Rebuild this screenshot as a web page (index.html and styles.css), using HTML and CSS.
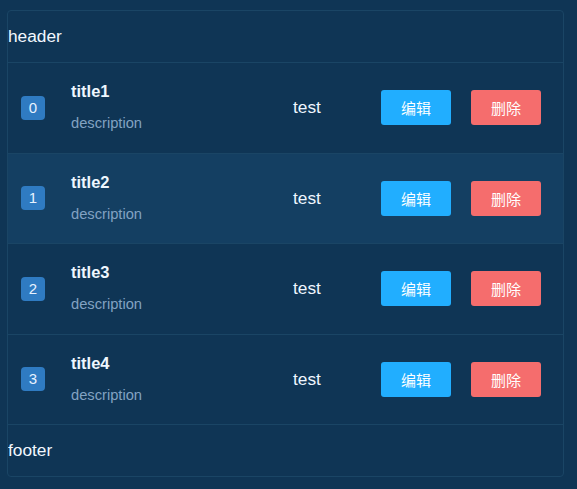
FILE: index.html
```html
<!DOCTYPE html>
<html lang="zh">
<head>
<meta charset="utf-8">
<title>list</title>
<link rel="stylesheet" href="styles.css">
</head>
<body>
<div class="panel">
  <div class="panel-header">header</div>
  <ul class="list">
    <li class="row">
      <span class="badge">0</span>
      <div class="info"><div class="title">title1</div><div class="desc">description</div></div>
      <span class="meta">test</span>
      <button class="btn btn-edit">编辑</button>
      <button class="btn btn-del">删除</button>
    </li>
    <li class="row active">
      <span class="badge">1</span>
      <div class="info"><div class="title">title2</div><div class="desc">description</div></div>
      <span class="meta">test</span>
      <button class="btn btn-edit">编辑</button>
      <button class="btn btn-del">删除</button>
    </li>
    <li class="row">
      <span class="badge">2</span>
      <div class="info"><div class="title">title3</div><div class="desc">description</div></div>
      <span class="meta">test</span>
      <button class="btn btn-edit">编辑</button>
      <button class="btn btn-del">删除</button>
    </li>
    <li class="row">
      <span class="badge">3</span>
      <div class="info"><div class="title">title4</div><div class="desc">description</div></div>
      <span class="meta">test</span>
      <button class="btn btn-edit">编辑</button>
      <button class="btn btn-del">删除</button>
    </li>
  </ul>
  <div class="panel-footer">footer</div>
</div>
</body>
</html>
```

FILE: styles.css
```css
html, body {
  margin: 0;
  padding: 0;
  background: #0f3555;
}
body {
  padding: 10px 13px 0 7px;
  font-family: "Liberation Sans", Arial, "Noto Sans CJK SC", sans-serif;
  color: #ffffff;
}
.panel {
  border: 1px solid #1a4565;
  border-radius: 4px;
  background: #0f3555;
  overflow: hidden;
}
.panel-header,
.panel-footer {
  height: 51px;
  line-height: 51px;
  font-size: 17.3px;
  padding-left: 0;
  color: #f2f8ff;
}
.panel-header {
  border-bottom: 1px solid #1a4565;
}
.list {
  list-style: none;
  margin: 0;
  padding: 0;
}
.row {
  display: flex;
  align-items: center;
  height: 89.5px;
  border-bottom: 1px solid #1a4565;
  padding-right: 22px;
}
.row.active {
  background: #143f62;
}
.badge {
  width: 24px;
  height: 24px;
  margin: 0 26px 0 13px;
  border-radius: 4px;
  background: #2f7bc2;
  color: #e8f2ff;
  font-size: 15px;
  line-height: 24px;
  text-align: center;
  flex: none;
}
.info {
  flex: 1;
  margin-top: -1px;
}
.title {
  font-size: 16.5px;
  font-weight: bold;
  line-height: 20px;
  color: #eef7ff;
}
.desc {
  margin-top: 12px;
  font-size: 14.7px;
  line-height: 20px;
  color: #82a2c2;
}
.meta {
  width: 88px;
  font-size: 17.3px;
  color: #eef6ff;
  flex: none;
}
.btn {
  width: 70px;
  height: 35px;
  border: none;
  border-radius: 3px;
  color: #ffffff;
  font-family: "Liberation Sans", "Noto Sans CJK SC", sans-serif;
  font-size: 15px;
  padding: 0;
  flex: none;
}
.btn-edit {
  background: #21aeff;
}
.btn-del {
  background: #f56d6d;
  margin-left: 20px;
}
```
